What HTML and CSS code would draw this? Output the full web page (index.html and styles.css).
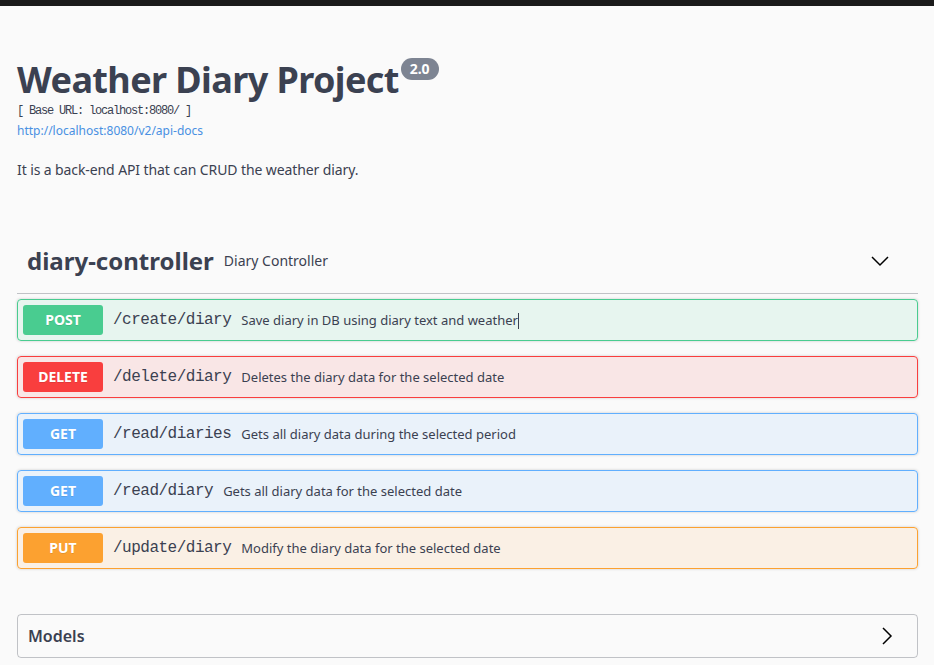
FILE: index.html
```html
<!DOCTYPE html>
<html lang="en">
<head>
    <meta charset="UTF-8">
    <meta name="viewport" content="width=device-width, initial-scale=1.0">
    <title>Weather Diary Project</title>
    <link rel="stylesheet" href="styles.css">
</head>
<body>
    <div class="topbar"></div>
    <div class="wrapper">
        <div class="info">
            <h2 class="title">Weather Diary Project <span class="version">2.0</span></h2>
            <div class="base-url">[ Base URL: localhost:8080/ ]</div>
            <a class="docs-link" href="#">http://localhost:8080/v2/api-docs</a>
            <p class="description">It is a back-end API that can CRUD the weather diary.</p>
        </div>

        <div class="tag-section">
            <h3 class="tag">
                <span class="tag-name">diary-controller</span>
                <span class="tag-desc">Diary Controller</span>
                <svg class="arrow" width="20" height="20" viewBox="0 0 20 20">
                    <path d="M2 6 L10 14 L18 6" fill="none" stroke="#000" stroke-width="1.5"/>
                </svg>
            </h3>

            <div class="opblock post">
                <span class="method">POST</span>
                <span class="path">/create/diary</span>
                <span class="summary">Save diary in DB using diary text and weather<span class="caret"></span></span>
            </div>
            <div class="opblock delete">
                <span class="method">DELETE</span>
                <span class="path">/delete/diary</span>
                <span class="summary">Deletes the diary data for the selected date</span>
            </div>
            <div class="opblock get">
                <span class="method">GET</span>
                <span class="path">/read/diaries</span>
                <span class="summary">Gets all diary data during the selected period</span>
            </div>
            <div class="opblock get">
                <span class="method">GET</span>
                <span class="path">/read/diary</span>
                <span class="summary">Gets all diary data for the selected date</span>
            </div>
            <div class="opblock put">
                <span class="method">PUT</span>
                <span class="path">/update/diary</span>
                <span class="summary">Modify the diary data for the selected date</span>
            </div>
        </div>

        <div class="models">
            <h4>Models</h4>
            <svg class="arrow" width="20" height="20" viewBox="0 0 20 20">
                <path d="M6 2 L14 10 L6 18" fill="none" stroke="#000" stroke-width="1.5"/>
            </svg>
        </div>
    </div>
</body>
</html>
```

FILE: styles.css
```css
body {
    margin: 0;
    background: #fafafa;
    font-family: 'Noto Sans', sans-serif;
    color: #3b4151;
}

.topbar {
    height: 6px;
    background: #1b1b1b;
}

.wrapper {
    padding: 0 16px 0 17px;
}

.info {
    margin: 54px 0 52px;
}

.title {
    font-size: 36px;
    font-weight: bold;
    margin: 2px 0 0;
    line-height: 40px;
    letter-spacing: -0.6px;
}

.version {
    display: inline-block;
    vertical-align: top;
    position: relative;
    top: -2px;
    margin-left: -7px;
    font-size: 14px;
    line-height: 22px;
    padding: 0 9px;
    border-radius: 57px;
    background: #7d8492;
    color: #fff;
    letter-spacing: 0;
}

.base-url {
    font-family: 'Liberation Mono', monospace;
    font-size: 12px;
    letter-spacing: -1.2px;
    line-height: 20px;
    margin-top: 1px;
}

.docs-link {
    display: block;
    font-size: 12px;
    line-height: 20px;
    color: #4990e2;
    text-decoration: none;
}

.description {
    font-size: 14px;
    margin: 19px 0 0;
    line-height: 20px;
    letter-spacing: -0.1px;
}

.tag {
    display: flex;
    align-items: center;
    margin: 0 0 5px;
    padding: 7px 20px 11px 10px;
    box-sizing: border-box;
    border-bottom: 1px solid rgba(59, 65, 81, 0.3);
    height: 62px;
}

.tag-name {
    font-size: 24px;
    font-weight: bold;
}

.tag-desc {
    font-size: 14px;
    font-weight: normal;
    margin-left: 10px;
    flex: 1;
}

.arrow {
    margin-right: 8px;
}

.opblock {
    display: flex;
    align-items: center;
    padding: 5px;
    margin-bottom: 15px;
    border: 1px solid;
    border-radius: 4px;
    box-shadow: 0 0 3px rgba(0, 0, 0, 0.19);
    height: 42px;
    box-sizing: border-box;
}

.method {
    width: 80px;
    height: 30px;
    line-height: 30px;
    text-align: center;
    border-radius: 3px;
    color: #fff;
    font-size: 14px;
    font-weight: bold;
    text-shadow: 0 1px 0 rgba(0, 0, 0, 0.1);
}

.path {
    font-family: 'Liberation Mono', monospace;
    font-size: 16px;
    letter-spacing: -0.5px;
    padding: 0 10px;
}

.summary {
    font-size: 13px;
}

.caret {
    display: inline-block;
    width: 1px;
    height: 16px;
    background: #3b4151;
    vertical-align: middle;
}

.post { background: rgba(73, 204, 144, 0.1); border-color: #49cc90; }
.post .method { background: #49cc90; }

.delete { background: rgba(249, 62, 62, 0.1); border-color: #f93e3e; }
.delete .method { background: #f93e3e; }

.get { background: rgba(97, 175, 254, 0.1); border-color: #61affe; }
.get .method { background: #61affe; }

.put { background: rgba(252, 161, 48, 0.1); border-color: #fca130; }
.put .method { background: #fca130; }

.models {
    display: flex;
    align-items: center;
    margin-top: 45px;
    border: 1px solid rgba(59, 65, 81, 0.3);
    border-radius: 4px;
    height: 44px;
    box-sizing: border-box;
    padding: 0 20px 0 10px;
}

.models h4 {
    flex: 1;
    margin: 0;
    font-size: 16px;
    font-weight: 600;
}

.models .arrow {
    margin-right: 0;
}
```
